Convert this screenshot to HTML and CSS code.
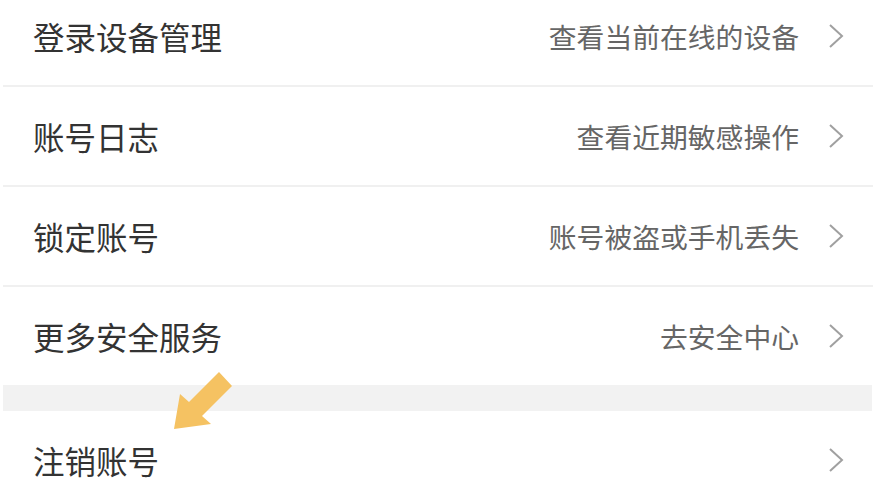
FILE: index.html
```html
<!DOCTYPE html>
<html lang="zh-CN">
<head>
  <meta charset="UTF-8" />
  <meta name="viewport" content="width=device-width, initial-scale=1" />
  <title>账号与安全</title>
  <link rel="stylesheet" href="styles.css">
</head>
<body>
  <div class="page">
    <ul class="menu">
      <li class="row">
        <span class="title">登录设备管理</span>
        <span class="desc">查看当前在线的设备</span>
        <svg class="chevron" viewBox="0 0 16 26"><polyline points="2,2 14,13 2,24" /></svg>
      </li>
      <li class="row">
        <span class="title">账号日志</span>
        <span class="desc">查看近期敏感操作</span>
        <svg class="chevron" viewBox="0 0 16 26"><polyline points="2,2 14,13 2,24" /></svg>
      </li>
      <li class="row">
        <span class="title">锁定账号</span>
        <span class="desc">账号被盗或手机丢失</span>
        <svg class="chevron" viewBox="0 0 16 26"><polyline points="2,2 14,13 2,24" /></svg>
      </li>
      <li class="row last">
        <span class="title">更多安全服务</span>
        <span class="desc">去安全中心</span>
        <svg class="chevron" viewBox="0 0 16 26"><polyline points="2,2 14,13 2,24" /></svg>
      </li>
    </ul>

    <div class="gap"></div>

    <ul class="menu">
      <li class="row last">
        <span class="title">注销账号</span>
        <span class="desc"></span>
        <svg class="chevron" viewBox="0 0 16 26"><polyline points="2,2 14,13 2,24" /></svg>
      </li>
    </ul>

    <!-- pointer drawn over the screenshot -->
    <svg class="pointer" viewBox="0 0 70 70">
      <polygon points="45,1 58,15 28,45 37,53 0,58 6,23 15,31" />
    </svg>
  </div>
</body>
</html>
```

FILE: styles.css
```css
body {
  margin: 0;
  background-color: #fff;
  font-family: "Noto Sans CJK SC", "Noto Sans", sans-serif;
  overflow: hidden;
}
.page {
  position: relative;
  margin: 0 4px 0 3px;
}
.menu {
  list-style: none;
  margin: 0;
  padding: 0;
}
.menu:first-child {
  margin-top: -13px;
}
.row {
  display: flex;
  align-items: center;
  height: 100px;
  padding: 0 29px 0 30px;
  box-sizing: border-box;
  border-bottom: 2px solid #f0f0f0;
}
.row.last {
  border-bottom: none;
  height: 98px;
}
.title {
  font-size: 31.5px;
  color: #333;
  flex: 1;
}
.desc {
  font-size: 27.8px;
  color: #666;
  margin-right: 29px;
}
.chevron {
  width: 16px;
  height: 26px;
  fill: none;
  stroke: #a0a0a0;
  stroke-width: 2;
  stroke-linejoin: miter;
}
.gap {
  height: 26px;
  background-color: #f2f2f2;
  margin-right: 1px;
}
.pointer {
  position: absolute;
  left: 171px;
  top: 384px;
  width: 70px;
  height: 70px;
  fill: #f5c262;
}
```
